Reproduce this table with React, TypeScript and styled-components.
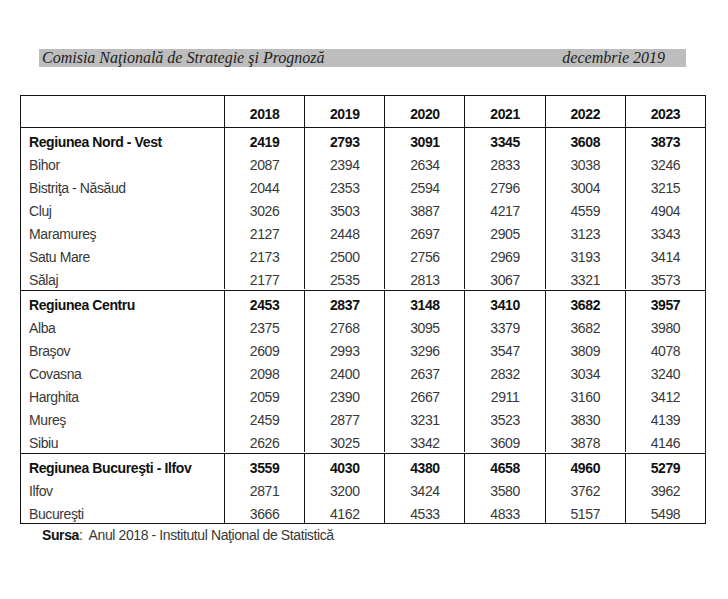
import React from "react";
import styled, { createGlobalStyle } from "styled-components";

const GlobalStyle = createGlobalStyle`
  html, body { margin: 0; padding: 0; background: #ffffff; }
  body { font-family: "Liberation Sans", Arial, sans-serif; }
`;

const Page = styled.div`
  width: 728px;
  height: 599px;
  box-sizing: border-box;
  padding-top: 49px;
  background: #fff;
  overflow: hidden;
`;

const TitleBar = styled.div`
  margin-left: 39px;
  width: 647px;
  height: 18px;
  box-sizing: border-box;
  padding: 0 21px 0 3px;
  background: #bdbdbd;
  display: flex;
  align-items: center;
  justify-content: space-between;
  font-family: "Liberation Serif", "Times New Roman", serif;
  font-style: italic;
  font-size: 16px;
  color: #222;
  line-height: 18px;
`;

const Table = styled.div`
  margin: 28px 0 0 20px;
  width: 686px;
  box-sizing: border-box;
  border: 1px solid #151515;
`;

const Row = styled.div<{ $header?: boolean }>`
  display: grid;
  grid-template-columns: 203px repeat(6, 1fr);
  height: ${(p) => (p.$header ? "31px" : "23px")};
  border-bottom: ${(p) => (p.$header ? "1px solid #151515" : "none")};
`;

const Group = styled.div<{ $last?: boolean }>`
  padding-bottom: ${(p) => (p.$last ? "0" : "1px")};
  border-bottom: ${(p) => (p.$last ? "none" : "1px solid #151515")};
`;

const Cell = styled.div<{ $label?: boolean; $bold?: boolean; $header?: boolean }>`
  box-sizing: border-box;
  border-left: ${(p) => (p.$label ? "none" : "1px solid #151515")};
  padding-left: ${(p) => (p.$label ? "8px" : "0")};
  padding-top: ${(p) => (p.$header ? "9px" : "5px")};
  text-align: ${(p) => (p.$label ? "left" : "center")};
  font-size: 14px;
  letter-spacing: -0.4px;
  line-height: 18px;
  font-weight: ${(p) => (p.$bold ? 700 : 400)};
  color: ${(p) => (p.$bold ? "#111" : "#383838")};
  white-space: nowrap;
`;

const Source = styled.div`
  margin: 2px 0 0 42px;
  font-size: 14px;
  letter-spacing: -0.4px;
  line-height: 18px;
  color: #383838;
`;

const SourceLabel = styled.span`
  font-weight: 700;
  color: #111;
`;

type DataRow = { name: string; values: number[]; bold?: boolean };

const years = [2018, 2019, 2020, 2021, 2022, 2023];

const groups: DataRow[][] = [
  [
    { name: "Regiunea Nord - Vest", values: [2419, 2793, 3091, 3345, 3608, 3873], bold: true },
    { name: "Bihor", values: [2087, 2394, 2634, 2833, 3038, 3246] },
    { name: "Bistriţa - Năsăud", values: [2044, 2353, 2594, 2796, 3004, 3215] },
    { name: "Cluj", values: [3026, 3503, 3887, 4217, 4559, 4904] },
    { name: "Maramureş", values: [2127, 2448, 2697, 2905, 3123, 3343] },
    { name: "Satu Mare", values: [2173, 2500, 2756, 2969, 3193, 3414] },
    { name: "Sălaj", values: [2177, 2535, 2813, 3067, 3321, 3573] },
  ],
  [
    { name: "Regiunea Centru", values: [2453, 2837, 3148, 3410, 3682, 3957], bold: true },
    { name: "Alba", values: [2375, 2768, 3095, 3379, 3682, 3980] },
    { name: "Braşov", values: [2609, 2993, 3296, 3547, 3809, 4078] },
    { name: "Covasna", values: [2098, 2400, 2637, 2832, 3034, 3240] },
    { name: "Harghita", values: [2059, 2390, 2667, 2911, 3160, 3412] },
    { name: "Mureş", values: [2459, 2877, 3231, 3523, 3830, 4139] },
    { name: "Sibiu", values: [2626, 3025, 3342, 3609, 3878, 4146] },
  ],
  [
    { name: "Regiunea Bucureşti - Ilfov", values: [3559, 4030, 4380, 4658, 4960, 5279], bold: true },
    { name: "Ilfov", values: [2871, 3200, 3424, 3580, 3762, 3962] },
    { name: "Bucureşti", values: [3666, 4162, 4533, 4833, 5157, 5498] },
  ],
];

export default function App() {
  return (
    <>
      <GlobalStyle />
      <Page>
        <TitleBar>
          <span>Comisia Naţională de Strategie şi Prognoză</span>
          <span>decembrie 2019</span>
        </TitleBar>
        <Table>
          <Row $header>
            <Cell $label $header />
            {years.map((y) => (
              <Cell key={y} $header $bold>
                {y}
              </Cell>
            ))}
          </Row>
          {groups.map((g, gi) => (
            <Group key={gi} $last={gi === groups.length - 1}>
              {g.map((r) => (
                <Row key={r.name}>
                  <Cell $label $bold={r.bold}>
                    {r.name}
                  </Cell>
                  {r.values.map((v, i) => (
                    <Cell key={i} $bold={r.bold}>
                      {v}
                    </Cell>
                  ))}
                </Row>
              ))}
            </Group>
          ))}
        </Table>
        <Source>
          <SourceLabel>Sursa</SourceLabel>:&nbsp; Anul 2018 - Institutul Naţional de Statistică
        </Source>
      </Page>
    </>
  );
}
